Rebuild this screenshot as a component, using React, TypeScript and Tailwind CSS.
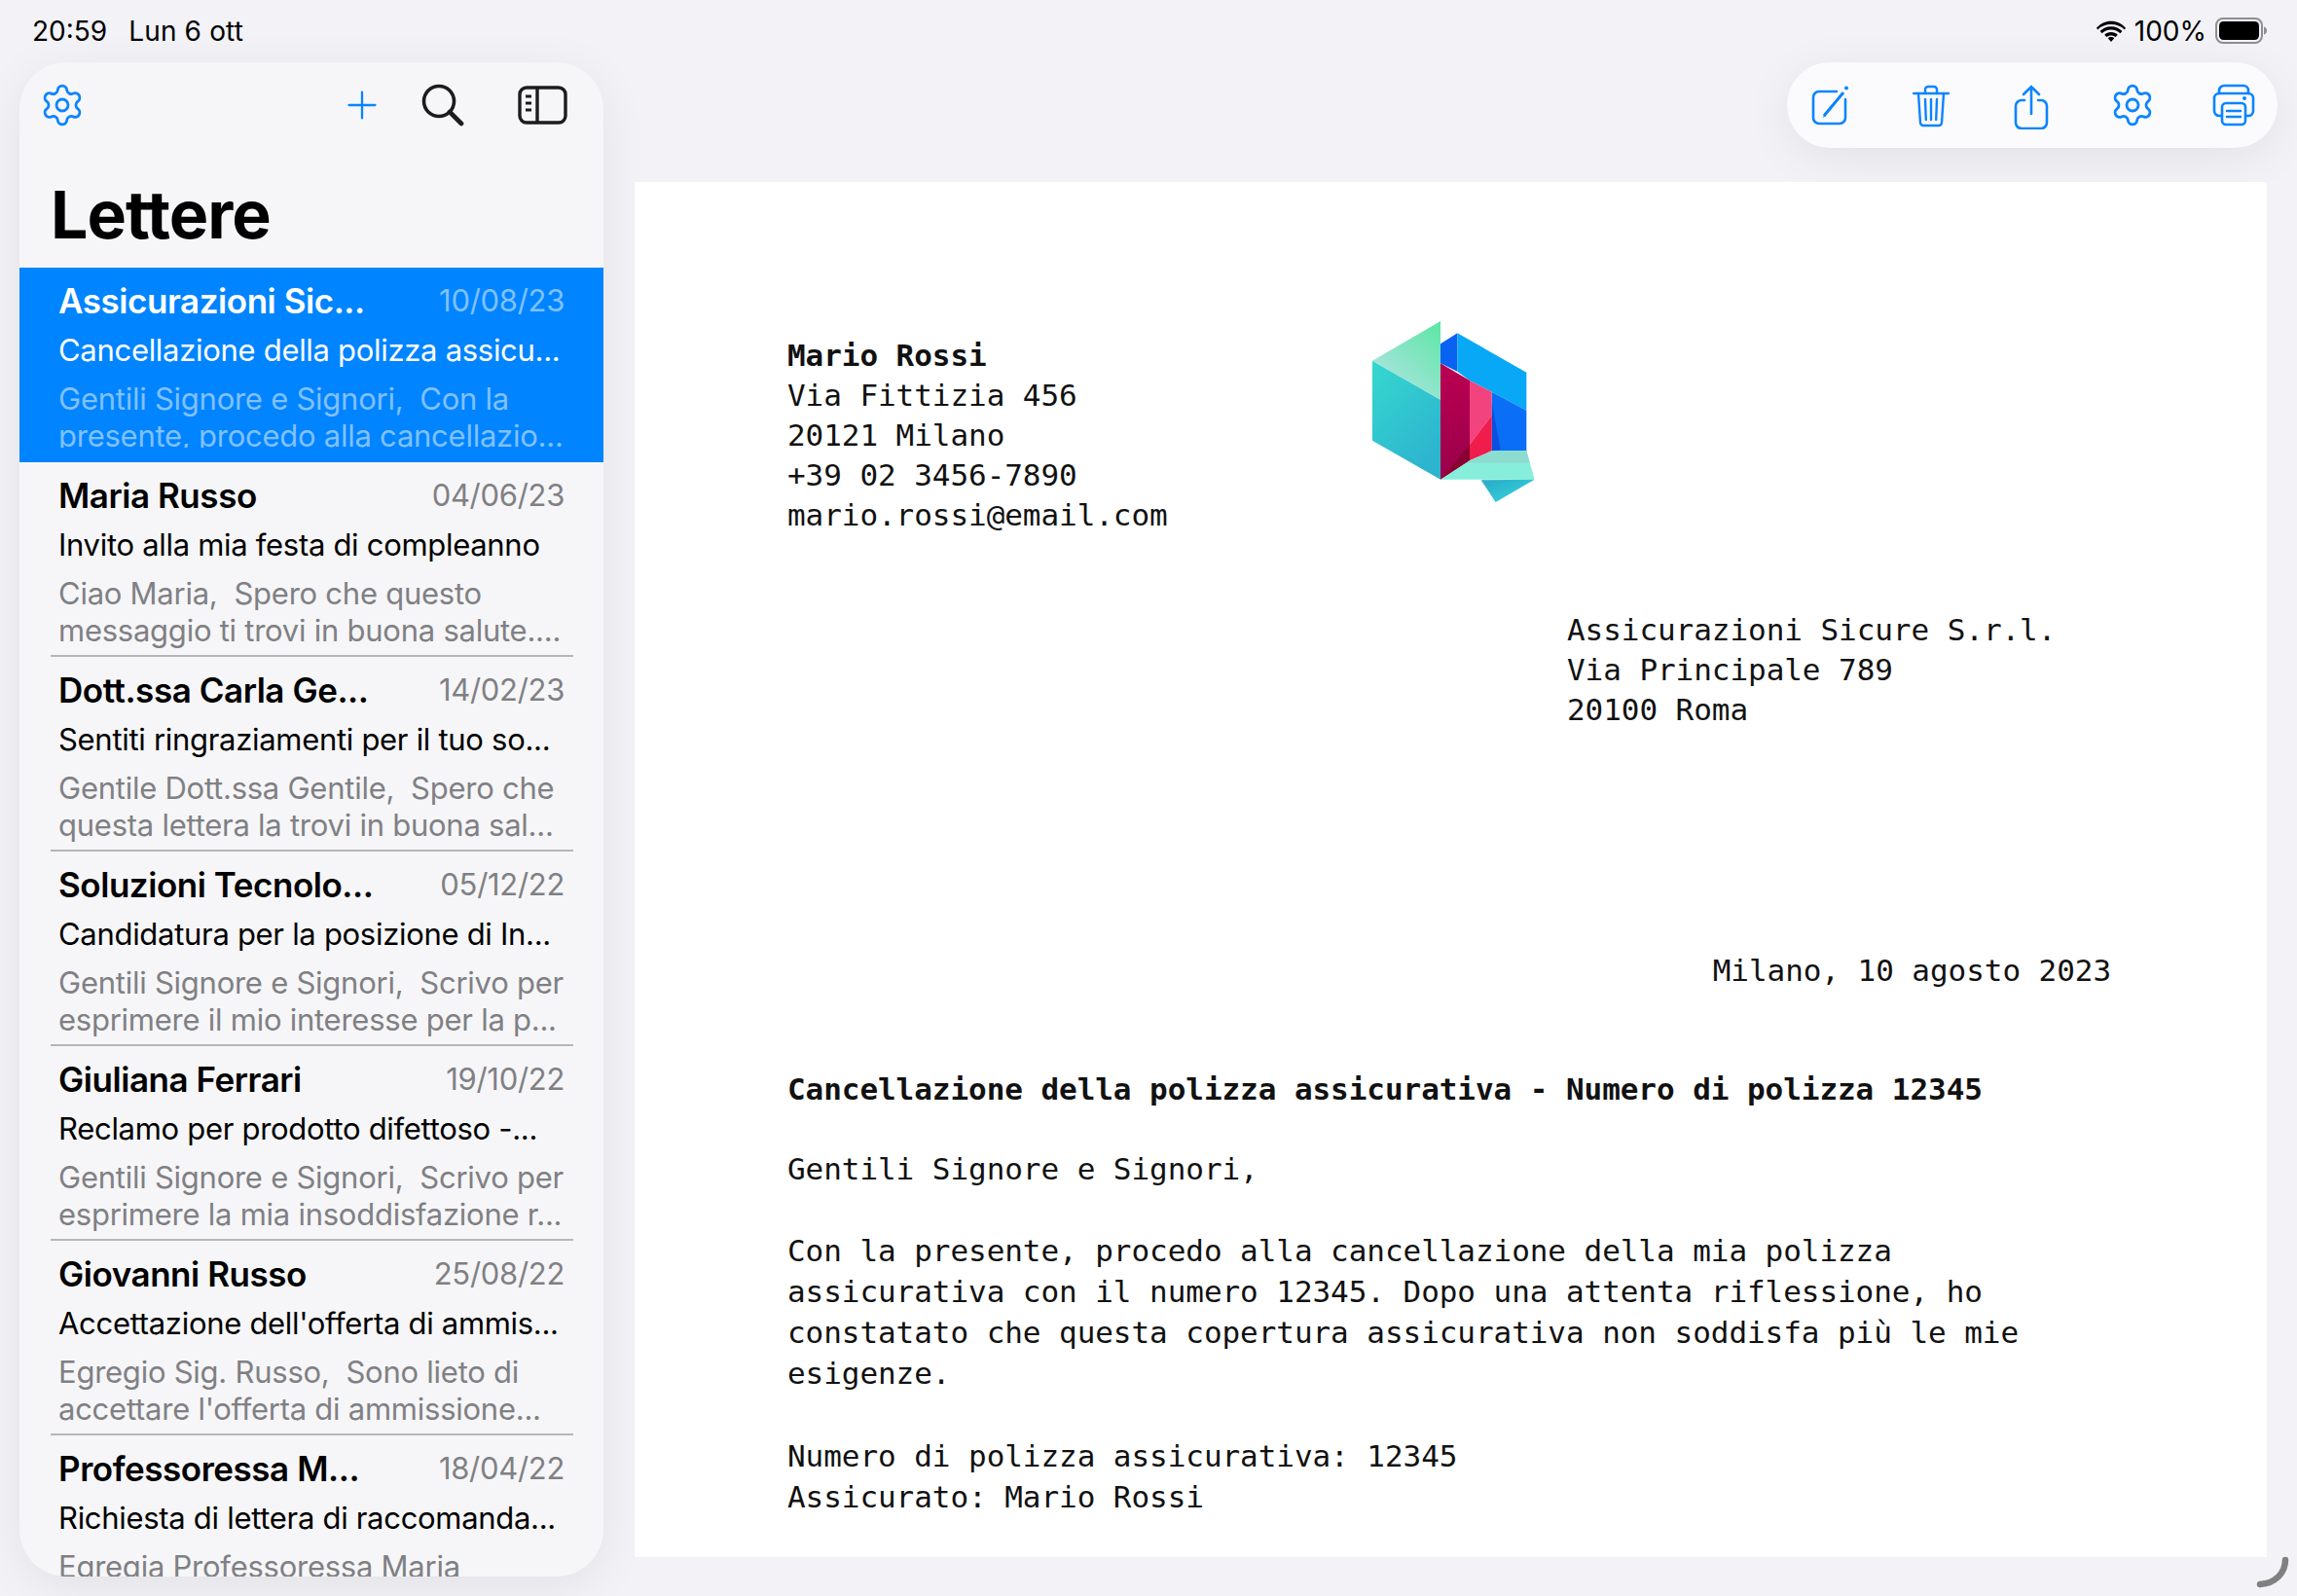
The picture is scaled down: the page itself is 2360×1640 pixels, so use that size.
import { Settings, Plus } from "lucide-react";

const letters = [
  {
    name: "Assicurazioni Sic...",
    date: "10/08/23",
    subject: "Cancellazione della polizza assicu...",
    preview: ["Gentili Signore e Signori,  Con la", "presente, procedo alla cancellazio..."],
  },
  {
    name: "Maria Russo",
    date: "04/06/23",
    subject: "Invito alla mia festa di compleanno",
    preview: ["Ciao Maria,  Spero che questo", "messaggio ti trovi in buona salute...."],
  },
  {
    name: "Dott.ssa Carla Ge...",
    date: "14/02/23",
    subject: "Sentiti ringraziamenti per il tuo so...",
    preview: ["Gentile Dott.ssa Gentile,  Spero che", "questa lettera la trovi in buona sal..."],
  },
  {
    name: "Soluzioni Tecnolo...",
    date: "05/12/22",
    subject: "Candidatura per la posizione di In...",
    preview: ["Gentili Signore e Signori,  Scrivo per", "esprimere il mio interesse per la p..."],
  },
  {
    name: "Giuliana Ferrari",
    date: "19/10/22",
    subject: "Reclamo per prodotto difettoso -...",
    preview: ["Gentili Signore e Signori,  Scrivo per", "esprimere la mia insoddisfazione r..."],
  },
  {
    name: "Giovanni Russo",
    date: "25/08/22",
    subject: "Accettazione dell'offerta di ammis...",
    preview: ["Egregio Sig. Russo,  Sono lieto di", "accettare l'offerta di ammissione..."],
  },
  {
    name: "Professoressa M...",
    date: "18/04/22",
    subject: "Richiesta di lettera di raccomanda...",
    preview: ["Egregia Professoressa Maria", ""],
  },
];

function Logo() {
  return (
    <svg width="200" height="220" viewBox="0 0 600 660" className="shrink-0">
      <defs>
        <linearGradient id="lf" x1="0" y1="0" x2="0.6" y2="1">
          <stop offset="0" stopColor="#35d8cf" />
          <stop offset="1" stopColor="#2db4cf" />
        </linearGradient>
        <linearGradient id="tp" x1="1" y1="0" x2="0.3" y2="0.9">
          <stop offset="0" stopColor="#5be6a4" />
          <stop offset="1" stopColor="#a9e4de" />
        </linearGradient>
        <linearGradient id="tl" x1="0" y1="0" x2="1" y2="1">
          <stop offset="0" stopColor="#2aa9c6" />
          <stop offset="1" stopColor="#35d8e2" />
        </linearGradient>
        <linearGradient id="cr" x1="0" y1="0" x2="0" y2="1">
          <stop offset="0" stopColor="#bb0052" />
          <stop offset="1" stopColor="#99004b" />
        </linearGradient>
      </defs>
      <polygon points="90,182 300,302 300,548 90,428" fill="url(#lf)" />
      <polygon points="300,60 90,182 300,302" fill="url(#tp)" />
      <polygon points="300,130 352,97 352,215 300,190" fill="#0a62f2" />
      <polygon points="352,97 565,218 565,335 458,278 390,243 352,215" fill="#08a8f6" />
      <polygon points="458,278 565,335 565,460 458,460" fill="#0a6ff6" />
      <polygon points="458,310 485,456 458,462" fill="#0a4fe0" />
      <polygon points="300,190 390,243 390,490 300,548" fill="url(#cr)" />
      <polygon points="300,548 390,440 390,490" fill="#8a0030" />
      <polygon points="390,243 458,278 458,350 390,440" fill="#f2437f" />
      <polygon points="390,440 458,350 458,460 390,490" fill="#f01c4c" />
      <polygon points="300,548 390,490 458,460 565,460 590,548" fill="#86eedb" />
      <polygon points="380,497 458,460 565,460 575,497" fill="#8cdccf" />
      <polygon points="425,550 590,548 470,618" fill="url(#tl)" />
    </svg>
  );
}

function SearchIcon() {
  return (
    <svg width="44" height="44" viewBox="0 0 44 44" fill="none" stroke="#1c1c1e" strokeWidth="3.6" strokeLinecap="round">
      <circle cx="18" cy="18" r="15.500" />
      <path d="M29 29l12 12" strokeWidth="4.600" />
    </svg>
  );
}

function SidebarIcon() {
  return (
    <svg width="52" height="42" viewBox="0 0 52 42" fill="none" stroke="#1c1c1e" strokeWidth="3.4">
      <rect x="2" y="3" width="47" height="36" rx="7" />
      <path d="M20 3v36" />
      <path d="M8 12h6M8 19h6M8 26h6" strokeWidth="3" />
    </svg>
  );
}

function ComposeIcon() {
  return (
    <svg width="42" height="42" viewBox="0 0 42 42" fill="none" stroke="#0a84ff" strokeWidth="2.6">
      <path d="M27 7H9a6 6 0 0 0-6 6v21a6 6 0 0 0 6 6h21a6 6 0 0 0 6-6V15" strokeLinecap="round" />
      <path d="M14 32 L34 8" strokeWidth="3" />
      <path d="M13 34l1-3 2 1z" fill="#0a84ff" stroke="none" />
      <circle cx="37" cy="3.500" r="2" fill="#0a84ff" stroke="none" />
    </svg>
  );
}

function TrashIcon() {
  return (
    <svg width="38" height="44" viewBox="0 0 38 44" fill="none" stroke="#0a84ff" strokeWidth="2.4" strokeLinecap="round">
      <path d="M1 9h36" />
      <path d="M13 9V5a3 3 0 0 1 3-3h6a3 3 0 0 1 3 3v4" />
      <path d="M6 9l2 30a3 3 0 0 0 3 3h16a3 3 0 0 0 3-3l2-30" />
      <path d="M13 15l.8 21M19 15v21M25 15l-.8 21" />
    </svg>
  );
}

function ShareIcon() {
  return (
    <svg width="36" height="46" viewBox="0 0 36 46" fill="none" stroke="#0a84ff" strokeWidth="2.6" strokeLinecap="round">
      <path d="M11 16H8a6 6 0 0 0-6 6v17a6 6 0 0 0 6 6h20a6 6 0 0 0 6-6V22a6 6 0 0 0-6-6h-3" />
      <path d="M18 30V2M10 10l8-8 8 8" />
    </svg>
  );
}

function PrinterIcon() {
  return (
    <svg width="44" height="44" viewBox="0 0 44 44" fill="none" stroke="#0a84ff" strokeWidth="2.6" strokeLinecap="round">
      <path d="M7 10V7a5 5 0 0 1 5-5h20a5 5 0 0 1 5 5v3" />
      <path d="M9 33H7a5 5 0 0 1-5-5V15a5 5 0 0 1 5-5h30a5 5 0 0 1 5 5v13a5 5 0 0 1-5 5h-2" />
      <rect x="10" y="20" width="24" height="22" rx="4" />
      <path d="M15 28h14M15 34h14" />
      <circle cx="33" cy="15" r="2" fill="#0a84ff" stroke="none" />
    </svg>
  );
}

function WifiIcon() {
  return (
    <svg width="30" height="22" viewBox="0 0 30 22" fill="#000">
      <path d="M15 4C9.500 4 4.800 6 1.200 9.400L0 7.800C4 3.400 9.300 0.800 15 0.800S26 3.400 30 7.800L28.800 9.400C25.200 6 20.500 4 15 4Z" />
      <path d="M15 9.500c-3.700 0-7 1.400-9.400 3.700L3.600 11C6.600 8 10.600 6.200 15 6.200S23.400 8 26.400 11l-2 2.200C22 10.900 18.700 9.500 15 9.500Z" />
      <path d="M15 12c-2.700 0-5 1-6.800 2.700l2.200 2.300c1.200-1 2.800-1.600 4.600-1.600s3.400.6 4.600 1.600l2.200-2.300C20 13 17.700 12 15 12Z" />
      <path d="M15 17c-1.300 0-2.500.5-3.300 1.200L15 22l3.300-3.800C17.500 17.500 16.300 17 15 17Z" />
    </svg>
  );
}

function BatteryIcon() {
  return (
    <svg width="54" height="28" viewBox="0 0 54 28">
      <rect x="1" y="1" width="47" height="25" rx="7" fill="none" stroke="#8e8e93" strokeWidth="2" />
      <rect x="4" y="4" width="41" height="19" rx="4.500" fill="#000" />
      <path d="M50 9.500c2 .5 3 2 3 4s-1 3.500-3 4z" fill="#8e8e93" />
    </svg>
  );
}

function LetterRow({ letter, index }: { letter: (typeof letters)[number]; index: number }) {
  const selected = index === 0;
  return (
    <div className={selected ? "h-[200px] shrink-0 bg-[#0084ff] px-[40px]" : "relative h-[200px] shrink-0 px-[40px]"}>
      {index > 1 && <div className="absolute top-[-2px] left-[32px] right-[31px] h-[2px] bg-[#b6b6b9]" />}
      <div className="flex h-[66px] items-center justify-between pt-[2px]">
        <span className={selected ? "text-[35px] font-semibold tracking-[-0.45px] text-white" : "text-[35px] font-semibold tracking-[-0.45px] text-black"}>
          {letter.name}
        </span>
        <span className={selected ? "text-[31px] tracking-[-0.3px] text-[#80c1ff]" : "text-[31px] tracking-[-0.3px] text-[#808084]"}>
          {letter.date}
        </span>
      </div>
      <div className={selected ? "h-[46px] text-[31px] leading-[38px] tracking-[-0.3px] whitespace-nowrap text-white" : "h-[46px] text-[31px] leading-[38px] tracking-[-0.3px] whitespace-nowrap text-black"}>
        {letter.subject}
      </div>
      <div className={selected ? "h-[73px] overflow-hidden pt-[4px] text-[31px] leading-[38px] tracking-[-0.25px] whitespace-pre text-[#80c1ff]" : "pt-[4px] text-[31px] leading-[38px] tracking-[-0.25px] whitespace-pre text-[#808084]"}>
        <div>{letter.preview[0]}</div>
        <div>{letter.preview[1]}</div>
      </div>
    </div>
  );
}

export default function App() {
  return (
    <div className="relative flex h-[1640px] w-[2360px] flex-col overflow-hidden bg-[#f2f2f7] font-['Inter','Noto_Sans',sans-serif] text-black">
      <div className="flex h-[64px] items-center justify-between pr-[30px] pl-[33px] text-[28px]">
        <div className="flex gap-[22px]">
          <span>20:59</span>
          <span className="tracking-[0.15px]">Lun 6 ott</span>
        </div>
        <div className="flex items-center gap-[9px]">
          <WifiIcon />
          <span>100%</span>
          <BatteryIcon />
        </div>
      </div>

      <div className="flex min-h-0 flex-1 pb-[20px] pl-[20px]">
        <aside className="flex w-[600px] flex-col overflow-hidden rounded-[48px] bg-[#f6f6f8] shadow-[0_10px_50px_rgba(0,0,0,0.07)]">
          <div className="flex h-[88px] shrink-0 items-center justify-between pr-[36px] pl-[20px]">
            <Settings size={48} strokeWidth={1.4} color="#0a84ff" />
            <div className="flex items-center">
              <Plus size={46} strokeWidth={1.2} color="#0a84ff" />
              <div className="ml-[38px]"><SearchIcon /></div>
              <div className="ml-[55px]"><SidebarIcon /></div>
            </div>
          </div>
          <h1 className="flex h-[123px] shrink-0 items-center pt-[12px] pl-[32px] text-[68px] font-bold tracking-[-1px]">
            Lettere
          </h1>
          <div className="flex min-h-0 flex-1 flex-col overflow-hidden">
            {letters.map((letter, i) => (
              <LetterRow key={letter.name} letter={letter} index={i} />
            ))}
          </div>
        </aside>

        <main className="ml-[32px] flex min-w-0 flex-1 flex-col pr-[31px]">
          <div className="-mr-[11px] flex h-[88px] shrink-0 items-center self-end rounded-[44px] bg-[#fbfbfe] shadow-[0_10px_50px_rgba(0,0,0,0.07)]">
            <div className="flex w-[96px] justify-center pr-[6px]"><ComposeIcon /></div>
            <div className="flex w-[103.5px] justify-center pt-[2px]"><TrashIcon /></div>
            <div className="flex w-[103.5px] justify-center pt-[3px]"><ShareIcon /></div>
            <div className="flex w-[103.5px] justify-center"><Settings size={48} strokeWidth={1.4} color="#0a84ff" /></div>
            <div className="flex w-[97.5px] justify-center pl-[7.5px]"><PrinterIcon /></div>
          </div>
          <article className="mt-[35px] mb-[20px] min-h-0 flex-1 overflow-hidden bg-white pl-[157px] font-['DejaVu_Sans_Mono',monospace] text-[31px] leading-[41px] tracking-[-0.06px] text-[#111]">
            <div className="flex pt-[123px]">
              <div className="w-[571px] shrink-0 pt-[35px] whitespace-pre">
                <div className="font-bold">Mario Rossi</div>
                <div>Via Fittizia 456</div>
                <div>20121 Milano</div>
                <div>+39 02 3456-7890</div>
                <div>mario.rossi@email.com</div>
              </div>
              <Logo />
            </div>
            <div className="mt-[77px] ml-[801px]">
              <div>Assicurazioni Sicure S.r.l.</div>
              <div>Via Principale 789</div>
              <div>20100 Roma</div>
            </div>
            <div className="mt-[227px] pr-[160px] text-right">Milano, 10 agosto 2023</div>
            <div className="mt-[81px] font-bold">Cancellazione della polizza assicurativa - Numero di polizza 12345</div>
            <div className="mt-[41px]">Gentili Signore e Signori,</div>
            <div className="mt-[42px] leading-[42px]">
              <div>Con la presente, procedo alla cancellazione della mia polizza</div>
              <div>assicurativa con il numero 12345. Dopo una attenta riflessione, ho</div>
              <div>constatato che questa copertura assicurativa non soddisfa più le mie</div>
              <div>esigenze.</div>
            </div>
            <div className="mt-[43px] leading-[42px]">
              <div>Numero di polizza assicurativa: 12345</div>
              <div>Assicurato: Mario Rossi</div>
            </div>
          </article>
        </main>
      </div>

      <svg className="absolute top-[1598px] left-[2318px]" width="36" height="36" viewBox="0 0 36 36" fill="none">
        <path d="M30 5c0 13-10 24-26 25" stroke="#808080" strokeWidth="6.500" strokeLinecap="round" />
      </svg>
    </div>
  );
}
